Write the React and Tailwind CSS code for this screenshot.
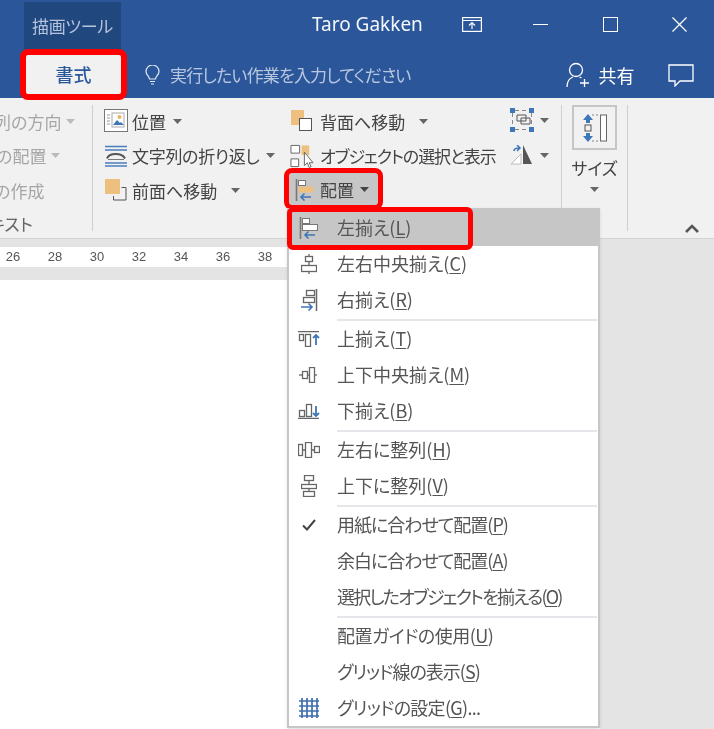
import React from 'react';

const jp = "font-['Noto_Sans_CJK_JP','Noto_Sans',sans-serif] [font-feature-settings:'palt']";

const Caret = ({ className = '' }) => (
    <svg width="9" height="5" viewBox="0 0 9 5" className={className}>
        <path d="M0 0h9L4.5 5z" fill="currentColor" />
    </svg>
);

// ribbon icons
const PositionIcon = () => (
    <svg width="24" height="24" viewBox="0 0 24 24" fill="none">
        <rect x="0.5" y="0.5" width="23" height="22" stroke="#777" fill="#fff" />
        <rect x="8" y="4" width="12" height="14" fill="#fff" stroke="#aaa" />
        <circle cx="15.5" cy="8" r="2" fill="#edb45f" />
        <path d="M9 16l4-5 3 3 1-1 3 3z" fill="#3f76b8" />
        <path d="M3 6h3M3 9h3M3 12h3M3 15h3" stroke="#999" />
    </svg>
);
const WrapIcon = () => (
    <svg width="24" height="22" viewBox="0 0 24 22" fill="none">
        <path d="M1 1.5h22M1 5h22M1 18h22M1 21h22" stroke="#4a7ebb" strokeWidth="1.4" />
        <path d="M3 13.5c2-6 15-6 18 0" stroke="#555" strokeWidth="2" />
        <path d="M4 14.5h16" stroke="#777" />
    </svg>
);
const FrontIcon = () => (
    <svg width="22" height="22" viewBox="0 0 22 22" fill="none">
        <rect x="0" y="0" width="15" height="15" fill="#edc07f" />
        <path d="M16.5 8.5h4.500v12.500h-12.500v-4" stroke="#555" />
    </svg>
);
const BackIcon = () => (
    <svg width="22" height="22" viewBox="0 0 22 22" fill="none">
        <rect x="0" y="0" width="13" height="15" fill="#edc07f" />
        <rect x="8.500" y="8.500" width="12" height="12" fill="#fff" stroke="#555" />
    </svg>
);
const SelectionIcon = () => (
    <svg width="25" height="24" viewBox="0 0 25 24" fill="none">
        <path d="M1 1h9v8H1zM1 15h8v8H1z" stroke="#666" fill="#fff" />
        <rect x="12" y="1" width="8" height="10" fill="#edc07f" />
        <path d="M15 8v14l3-3 2 5 2-1-2-4h4z" fill="#fff" stroke="#666" />
    </svg>
);
const AlignLeftBig = ({ fill = '#edc07f' }) => (
    <svg width="20" height="22" viewBox="0 0 20 22" fill="none">
        <path d="M1.500 0v22" stroke="#777" strokeWidth="1.600" />
        <rect x="3.500" y="1.500" width="7" height="5" fill="#fff" stroke="#777" />
        <rect x="3.500" y="7.500" width="15" height="6" fill={fill} stroke={fill === '#edc07f' ? 'none' : '#777'} />
        <path d="M16 18H6M9.500 14.500L6 18l3.500 3.500" stroke="#3f76b8" strokeWidth="1.600" />
    </svg>
);
const GroupIcon = () => (
    <svg width="24" height="24" viewBox="0 0 24 24" fill="none">
        <path d="M5 2.500h15M2.500 5v14M21.500 5v14M5 21.500h15" stroke="#888" strokeDasharray="4 3" />
        <path d="M7 7h9v6H7zM11 10h9v6h-9z" stroke="#555" />
        <path d="M0 0h5v5H0zM19 0h5v5h-5zM0 19h5v5H0zM19 19h5v5h-5z" fill="#3f76b8" />
    </svg>
);
const RotateIcon = () => (
    <svg width="24" height="20" viewBox="0 0 24 20" fill="none">
        <path d="M1 19L11 9v10z" fill="#fff" stroke="#bbb" />
        <path d="M13 0v19h9z" fill="#555" />
        <path d="M4 6c0-2 2-3 5-3M7 0l3 3-3 3" stroke="#3f76b8" strokeWidth="1.500" />
    </svg>
);
const SizeIcon = () => (
    <svg width="24" height="28" viewBox="0 0 24 28" fill="none">
        <path d="M5 0l5 6H7v3H3V6H0z" fill="#3f76b8" />
        <rect x="2" y="11" width="6" height="6" stroke="#555" />
        <path d="M5 28l5-6H7v-3H3v3H0z" fill="#3f76b8" />
        <path d="M9 1h6M9 27h6" stroke="#888" strokeDasharray="2 2" />
        <rect x="17.500" y="1" width="6" height="26" fill="#fff" stroke="#666" />
    </svg>
);

// menu icons
const Stroke = ({ w = 22, h = 22, children }) => (
    <svg width={w} height={h} viewBox={`0 0 ${w} ${h}`} fill="none" stroke="#666" strokeWidth="1.300">{children}</svg>
);
const CenterH = () => (
    <Stroke w={16} h={20}>
        <path d="M8 0v20" />
        <rect x="4.500" y="2.500" width="7" height="5" fill="#fff" />
        <rect x="0.500" y="11.500" width="15" height="6" fill="#fff" />
    </Stroke>
);
const AlignRight = () => (
    <Stroke w={18} h={22}>
        <path d="M16.500 0v22" strokeWidth="1.500" />
        <rect x="6.500" y="1.500" width="8" height="5" fill="#fff" />
        <rect x="3.500" y="8.500" width="11" height="5" fill="#fff" />
        <path d="M1 18h11M8.500 14.500L12 18l-3.500 3.500" stroke="#3f76b8" strokeWidth="1.600" />
    </Stroke>
);
const AlignTop = () => (
    <Stroke w={22} h={16}>
        <path d="M0 0.500h21" strokeWidth="1.500" />
        <rect x="1.500" y="3.500" width="4" height="6" fill="#fff" />
        <rect x="7.500" y="3.500" width="5" height="12" fill="#fff" />
        <path d="M18 14V4M15 7l3-3 3 3" stroke="#3f76b8" strokeWidth="1.800" />
    </Stroke>
);
const CenterV = () => (
    <Stroke w={20} h={16}>
        <path d="M0 8h18" />
        <rect x="3.500" y="4.500" width="5" height="7" fill="#fff" />
        <rect x="10.500" y="0.500" width="5" height="15" fill="#fff" />
    </Stroke>
);
const AlignBottom = () => (
    <Stroke w={22} h={16}>
        <path d="M0 15.500h21" strokeWidth="1.500" />
        <rect x="1.500" y="7.500" width="5" height="6" fill="#fff" />
        <rect x="8.500" y="1.500" width="5" height="12" fill="#fff" />
        <path d="M18 3v10M15 10l3 3 3-3" stroke="#3f76b8" strokeWidth="1.800" />
    </Stroke>
);
const DistributeH = () => (
    <Stroke w={22} h={16}>
        <rect x="0.500" y="2.500" width="4" height="11" fill="#fff" />
        <rect x="7.500" y="0.500" width="6" height="15" fill="#fff" />
        <rect x="16.500" y="4.500" width="5" height="6" fill="#fff" />
        <path d="M4 8h4M13 8h4" />
    </Stroke>
);
const DistributeV = () => (
    <Stroke w={16} h={22}>
        <rect x="3.500" y="0.500" width="9" height="5" fill="#fff" />
        <rect x="0.500" y="9.500" width="15" height="4" fill="#fff" />
        <rect x="2.500" y="16.500" width="11" height="5" fill="#fff" />
        <path d="M8 5v5M8 13v4" />
    </Stroke>
);
const Check = () => (
    <svg width="14" height="12" viewBox="0 0 14 12" fill="none">
        <path d="M1 6.500l4 4L13 1" stroke="#444" strokeWidth="2" />
    </svg>
);
const GridIcon = () => (
    <svg width="20" height="20" viewBox="0 0 20 20" fill="none" stroke="#3f6fae" strokeWidth="1.700">
        <path d="M0 3h20M0 8h20M0 13h20M0 18h20M3 0v20M8 0v20M13 0v20M18 0v20" />
    </svg>
);

const menuGroups = [
    [
        { label: '左揃え', key: 'L', icon: <AlignLeftBig fill="#fff" />, active: true },
        { label: '左右中央揃え', key: 'C', icon: <CenterH /> },
        { label: '右揃え', key: 'R', icon: <AlignRight /> },
    ],
    [
        { label: '上揃え', key: 'T', icon: <AlignTop /> },
        { label: '上下中央揃え', key: 'M', icon: <CenterV /> },
        { label: '下揃え', key: 'B', icon: <AlignBottom /> },
    ],
    [
        { label: '左右に整列', key: 'H', icon: <DistributeH /> },
        { label: '上下に整列', key: 'V', icon: <DistributeV /> },
    ],
    [
        { label: '用紙に合わせて配置', key: 'P', icon: <Check />, tight: 'tracking-[-1px]' },
        { label: '余白に合わせて配置', key: 'A', tight: 'tracking-[-1px]' },
        { label: '選択したオブジェクトを揃える', key: 'O', tight: 'tracking-[-1.800px]' },
    ],
    [
        { label: '配置ガイドの使用', key: 'U', tight: 'tracking-[-0.500px]' },
        { label: 'グリッド線の表示', key: 'S', tight: 'tracking-[-1px]' },
        { label: 'グリッドの設定', key: 'G', suffix: '...', icon: <GridIcon />, tight: 'tracking-[-0.700px]' },
    ],
];

const MenuItem = ({ item }) => (
    <div className={`relative flex h-9 items-center ${item.active ? 'bg-[#c6c6c6]' : ''}`}>
        <div className="flex w-10 shrink-0 items-center justify-center">{item.icon}</div>
        <span className={`-mt-[2px] ml-[8px] whitespace-nowrap text-[18px] text-[#555] ${item.tight || ''}`}>
            {item.label}(<span className="underline underline-offset-2">{item.key}</span>){item.suffix}
        </span>
        {item.active && (
            <div className="absolute -top-[3px] left-[-2px] h-[43px] w-[186px] rounded-md border-[5px] border-[#ff0000]"></div>
        )}
    </div>
);

const RibbonRow = ({ icon, label, caret = 'ml-2', muted, iconGap = 'mr-[4px]', labelClass = '' }) => (
    <div className="flex h-[34.500px] items-center whitespace-nowrap">
        {icon && <div className={`${iconGap} flex w-[24px] justify-center`}>{icon}</div>}
        <span className={`text-[17px] ${muted ? 'text-[#a6a6a6]' : 'text-[#444]'} ${labelClass}`}>{label}</span>
        {caret && <Caret className={`${caret} ${muted ? 'text-[#bbb]' : 'text-[#666]'}`} />}
    </div>
);

export default function App() {
    return (
        <div className={`${jp} flex h-[729px] w-[714px] flex-col overflow-hidden bg-white blur-[0.4px]`}>
            {/* title bar */}
            <div className="h-[98px] bg-[#2b579a] text-white">
                <div className="flex h-[49px]">
                    <div className="ml-6 mt-[2px] flex w-[97px] items-center justify-center bg-[#21477f] text-[17px] tracking-[-0.300px] text-[#b5c4dc]">描画ツール</div>
                    <div className="ml-[191px] flex items-center text-[19px] font-['Noto_Sans',sans-serif] text-[#f4f6fa]">Taro Gakken</div>
                    <div className="ml-[39px] flex items-center">
                        <svg width="20" height="15" viewBox="0 0 20 15" fill="none" stroke="#fff" strokeWidth="1.200">
                            <rect x="0.600" y="0.600" width="18.800" height="13.800" />
                            <path d="M1 3.500h18M10 12V6M7 8.500l3-3 3 3" />
                        </svg>
                    </div>
                    <div className="ml-[51px] flex items-center">
                        <div className="h-[1.500px] w-[15px] bg-white"></div>
                    </div>
                    <div className="ml-[55px] flex items-center">
                        <div className="h-[15px] w-[15px] border-[1.500px] border-white"></div>
                    </div>
                    <div className="ml-[54px] flex items-center">
                        <svg width="15" height="15" viewBox="0 0 15 15" stroke="#fff" strokeWidth="1.300">
                            <path d="M0.500 0.500l14 14M14.500 0.500l-14 14" />
                        </svg>
                    </div>
                </div>
                <div className="relative flex h-[49px] items-center pt-[3px]">
                    <div className="absolute left-[20px] top-0 z-10 flex h-[51px] w-[107px] items-center justify-center rounded-lg border-[6px] border-[#ff0000] bg-[#f1f1f1] text-[18px] font-medium text-[#2b579a]">書式</div>
                    <svg className="ml-[145px]" width="15" height="21" viewBox="0 0 15 21" fill="none" stroke="#e4e9f2" strokeWidth="1.200">
                        <path d="M4.500 14c0-3-3.500-4-3.500-7.500a6.500 6.500 0 0 1 13 0C14 10 10.500 11 10.500 14zM5 16.500h5M6 19h3" />
                    </svg>
                    <span className="ml-[10px] text-[17px] tracking-[-0.800px] text-[#b8c7e0]">実行したい作業を入力してください</span>
                    <svg className="ml-[155px]" width="24" height="26" viewBox="0 0 24 26" fill="none" stroke="#fff" strokeWidth="1.300">
                        <circle cx="10" cy="8" r="6.500" />
                        <path d="M1 25c0-6 3-9 6-10M13.500 15l2 1M18.500 17v8M14 21h9" />
                    </svg>
                    <span className="ml-[9px] text-[18px]">共有</span>
                    <svg className="ml-[33px]" width="26" height="23" viewBox="0 0 26 23" fill="none" stroke="#fff" strokeWidth="1.300">
                        <path d="M1 1h24v16H12l-5 5v-5H1z" />
                    </svg>
                </div>
            </div>

            {/* ribbon */}
            <div className="flex h-[141px] shrink-0 border-b border-[#d4d4d4] bg-[#f1f1f1] pt-[7px]">
                <div className="-mt-px w-[92px] overflow-hidden">
                    <div className="-ml-[6px]">
                        <RibbonRow label="列の方向" muted caret="ml-[5px]" />
                    </div>
                    <div className="-ml-[4px]">
                        <RibbonRow label="の配置" muted caret="ml-[5px]" />
                    </div>
                    <div className="-ml-[6px]">
                        <RibbonRow label="の作成" muted caret="" />
                    </div>
                    <div className="-ml-[11px] mt-[3px] whitespace-nowrap text-[17px] text-[#666]">キスト</div>
                </div>
                <div className="h-[126px] w-px bg-[#cfcfcf]"></div>

                <div className="-mt-px w-[197px] pl-[11px]">
                    <RibbonRow icon={<PositionIcon />} label="位置" caret="ml-[7px]" />
                    <RibbonRow icon={<WrapIcon />} label="文字列の折り返し" caret="ml-[6px]" labelClass="tracking-[-0.300px]" />
                    <RibbonRow icon={<FrontIcon />} label="前面へ移動" caret="ml-[14px]" />
                </div>

                <div className="-mt-px w-[220px]">
                    <RibbonRow icon={<BackIcon />} label="背面へ移動" caret="ml-[14px]" iconGap="mr-[6px]" />
                    <RibbonRow icon={<SelectionIcon />} label="オブジェクトの選択と表示" caret="" iconGap="mr-[6px]" labelClass="tracking-[-1.100px]" />
                    <div className="relative h-[34.500px]">
                        <div className="absolute -left-[2px] top-0 flex h-[33px] w-[90px] items-center bg-[#c6c6c6] pl-[7px]">
                            <AlignLeftBig />
                            <span className="ml-[5px] text-[17px] text-[#444]">配置</span>
                            <Caret className="ml-[6px] text-[#444]" />
                        </div>
                        <div className="absolute -left-[6px] -top-[5px] h-[42px] w-[99px] rounded-lg border-[5px] border-[#ff0000]"></div>
                    </div>
                </div>

                <div className="mt-[3px] flex w-[51px] flex-col gap-[13px]">
                    <div className="flex items-center">
                        <GroupIcon />
                        <Caret className="ml-[6px] text-[#666]" />
                    </div>
                    <div className="flex items-center">
                        <RotateIcon />
                        <Caret className="ml-[6px] text-[#666]" />
                    </div>
                </div>
                <div className="h-[126px] w-px bg-[#cfcfcf]"></div>

                <div className="flex w-[65px] flex-col items-center">
                    <div className="flex h-[45px] w-[45px] items-center justify-center border-2 border-[#c6c6c6]">
                        <SizeIcon />
                    </div>
                    <div className="mt-[5px] text-[17px] text-[#444]">サイズ</div>
                    <Caret className="mt-[6px] text-[#666]" />
                </div>
                <div className="h-[126px] w-px bg-[#cfcfcf]"></div>

                <div className="flex flex-1 items-end justify-end pb-[5px] pr-[15px]">
                    <svg width="14" height="9" viewBox="0 0 14 9" fill="none" stroke="#555" strokeWidth="2.500">
                        <path d="M1 8l6-6 6 6" />
                    </svg>
                </div>
            </div>

            {/* document area */}
            <div className="flex-1 bg-[#e4e4e4]">
                <div className="flex h-full w-[600px] flex-col pt-2">
                    <div className="flex h-5 shrink-0 items-center overflow-hidden bg-white font-['Liberation_Sans',sans-serif] text-[13px] text-[#555]">
                        <div className="-ml-[8px] flex">
                            {[26, 28, 30, 32, 34, 36, 38].map((n) => (
                                <div key={n} className="w-[42px] text-center">{n}</div>
                            ))}
                        </div>
                    </div>
                    <div className="h-[13px] shrink-0"></div>
                    <div className="flex-1 bg-white"></div>
                </div>
            </div>

            {/* arrange menu */}
            <div className="absolute left-[287px] top-[208px] h-[520px] w-[313px] border-2 border-[#c6c6c6] bg-white shadow-sm">
                {menuGroups.map((group, i) => (
                    <div key={i} className={i > 0 ? 'relative pt-[3px]' : ''}>
                        {i > 0 && <div className="absolute left-[48px] right-[1px] top-[0.500px] h-[2px] bg-[#e6e6ea]"></div>}
                        {group.map((item) => <MenuItem key={item.key} item={item} />)}
                    </div>
                ))}
            </div>
        </div>
    );
}
